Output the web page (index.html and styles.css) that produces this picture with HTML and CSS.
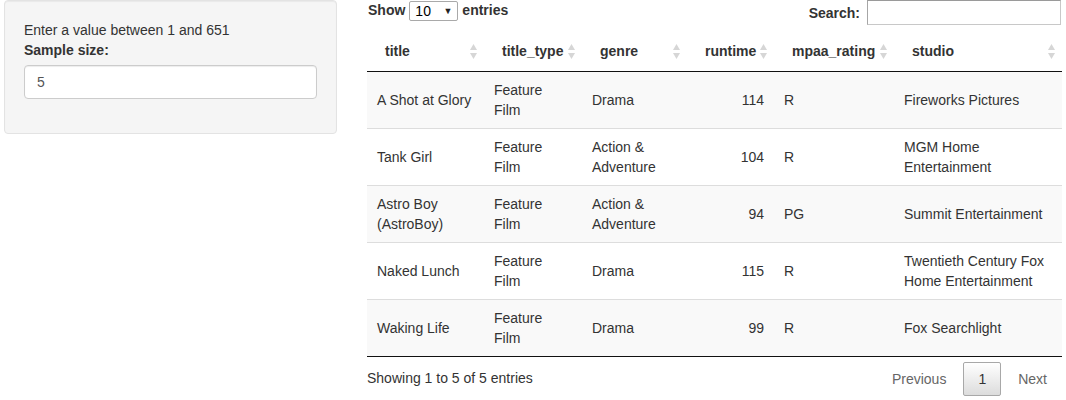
FILE: index.html
```html
<!DOCTYPE html>
<html>
<head>
<meta charset="utf-8">
<link rel="stylesheet" href="styles.css">
</head>
<body>
<div class="page">
  <div class="well">
    <div class="hint">Enter a value between 1 and 651</div>
    <div class="form-group">
      <label class="control-label" for="n">Sample size:</label>
      <input id="n" class="form-control" type="number" value="5">
    </div>
  </div>
  <div class="main">
    <div class="dt-top">
      <div class="dt-length">
        <span class="bold">Show</span>
        <span class="select-wrap"><span class="select-val">10</span><span class="select-arrow">▼</span></span>
        <span class="bold">entries</span>
      </div>
      <div class="dt-filter">
        <span class="bold">Search:</span>
        <input class="search" type="search">
      </div>
    </div>
    <table class="dt">
      <colgroup>
        <col style="width:117px"><col style="width:98px"><col style="width:105px"><col style="width:87px"><col style="width:120px"><col style="width:168px">
      </colgroup>
      <thead>
        <tr>
          <th>title<svg class="sort" width="7" height="15" viewBox="0 0 7 15"><polygon points="3.5,0 7,6 0,6"/><polygon points="0,9 7,9 3.5,15"/></svg></th>
          <th>title_type<svg class="sort" width="7" height="15" viewBox="0 0 7 15"><polygon points="3.5,0 7,6 0,6"/><polygon points="0,9 7,9 3.5,15"/></svg></th>
          <th>genre<svg class="sort" width="7" height="15" viewBox="0 0 7 15"><polygon points="3.5,0 7,6 0,6"/><polygon points="0,9 7,9 3.5,15"/></svg></th>
          <th class="num">runtime<svg class="sort" width="7" height="15" viewBox="0 0 7 15"><polygon points="3.5,0 7,6 0,6"/><polygon points="0,9 7,9 3.5,15"/></svg></th>
          <th>mpaa_rating<svg class="sort" width="7" height="15" viewBox="0 0 7 15"><polygon points="3.5,0 7,6 0,6"/><polygon points="0,9 7,9 3.5,15"/></svg></th>
          <th>studio<svg class="sort" width="7" height="15" viewBox="0 0 7 15"><polygon points="3.5,0 7,6 0,6"/><polygon points="0,9 7,9 3.5,15"/></svg></th>
        </tr>
      </thead>
      <tbody>
        <tr class="odd"><td>A Shot at Glory</td><td>Feature Film</td><td>Drama</td><td class="num">114</td><td>R</td><td>Fireworks Pictures</td></tr>
        <tr class="even"><td>Tank Girl</td><td>Feature Film</td><td>Action &amp; Adventure</td><td class="num">104</td><td>R</td><td>MGM Home Entertainment</td></tr>
        <tr class="odd"><td>Astro Boy (AstroBoy)</td><td>Feature Film</td><td>Action &amp; Adventure</td><td class="num">94</td><td>PG</td><td>Summit Entertainment</td></tr>
        <tr class="even"><td>Naked Lunch</td><td>Feature Film</td><td>Drama</td><td class="num">115</td><td>R</td><td>Twentieth Century Fox Home Entertainment</td></tr>
        <tr class="odd"><td>Waking Life</td><td>Feature Film</td><td>Drama</td><td class="num">99</td><td>R</td><td>Fox Searchlight</td></tr>
      </tbody>
    </table>
    <div class="dt-bottom">
      <div class="dt-info">Showing 1 to 5 of 5 entries</div>
      <div class="dt-paginate">
        <span class="pg disabled">Previous</span>
        <span class="pg current">1</span>
        <span class="pg disabled">Next</span>
      </div>
    </div>
  </div>
</div>
</body>
</html>
```
FILE: styles.css
```css
html, body {
  margin: 0;
  padding: 0;
  background: #fff;
}
body {
  font-family: "Liberation Sans", Arial, Helvetica, sans-serif;
  font-size: 14px;
  line-height: 20px;
  color: #333;
}
.page {
  display: flex;
  align-items: flex-start;
  gap: 30px;
  padding-left: 4px;
}
.well {
  box-sizing: border-box;
  width: 333px;
  padding: 19px;
  background: #f5f5f5;
  border: 1px solid #e3e3e3;
  border-radius: 4px;
  box-shadow: inset 0 1px 1px rgba(0,0,0,0.05);
}
.form-group {
  margin-bottom: 15px;
}
.control-label {
  display: block;
  font-weight: bold;
  margin-bottom: 5px;
}
.form-control {
  display: block;
  box-sizing: border-box;
  width: 100%;
  height: 34px;
  padding: 6px 12px;
  font-family: inherit;
  font-size: 14px;
  color: #555;
  background: #fff;
  border: 1px solid #ccc;
  border-radius: 4px;
  box-shadow: inset 0 1px 1px rgba(0,0,0,0.075);
  -moz-appearance: textfield;
}
.form-control::-webkit-outer-spin-button,
.form-control::-webkit-inner-spin-button {
  -webkit-appearance: none;
  margin: 0;
}
.main {
  width: 695px;
}
.bold {
  font-weight: bold;
}
.dt-top {
  display: flex;
  justify-content: space-between;
  height: 31px;
}
.dt-length {
  display: flex;
  align-items: flex-start;
  gap: 4px;
  height: 20px;
  padding-left: 1px;
}
.select-wrap {
  box-sizing: border-box;
  display: flex;
  align-items: center;
  justify-content: space-between;
  width: 49px;
  height: 20px;
  margin-top: 1px;
  padding: 0 5px 0 5px;
  border: 1px solid #a9a9a9;
  border-radius: 2px;
  background: #fff;
  color: #000;
  font-size: 14px;
  line-height: 18px;
}
.select-arrow {
  font-size: 9px;
  color: #222;
}
.dt-filter {
  display: flex;
  align-items: center;
  height: 25px;
}
.search {
  box-sizing: border-box;
  width: 194px;
  height: 25px;
  margin-left: 7px;
  margin-right: 1px;
  padding: 1px 4px;
  border: 1px solid #c8c8c8;
  border-top-color: #9a9a9a;
  border-left-color: #a6a6a6;
  background: #fff;
  font-family: inherit;
  font-size: 14px;
}
table.dt {
  width: 695px;
  table-layout: fixed;
  border-collapse: separate;
  border-spacing: 0;
  border-bottom: 1px solid #111;
}
table.dt th {
  position: relative;
  padding: 10px 18px;
  font-weight: bold;
  text-align: left;
  white-space: nowrap;
  border-bottom: 1px solid #111;
}
table.dt th .sort {
  position: absolute;
  right: 7px;
  top: 13px;
  fill: #d6d6d6;
}
table.dt td {
  padding: 8px 10px;
  vertical-align: middle;
  border-top: 1px solid #ddd;
}
table.dt tbody tr:first-child td {
  border-top: none;
}
table.dt tr.odd td {
  background: #f9f9f9;
}
table.dt .num {
  text-align: right;
}
.dt-bottom {
  display: flex;
  justify-content: space-between;
  align-items: flex-start;
}
.dt-info {
  padding-top: 11px;
}
.dt-paginate {
  display: flex;
  align-items: center;
  padding-top: 5px;
}
.pg {
  box-sizing: border-box;
  height: 34px;
  padding: 7px 14px;
  margin-left: 2px;
  border: 1px solid transparent;
  border-radius: 2px;
  line-height: 18px;
  color: #666;
}
.pg.current {
  color: #333;
  border: 1px solid #a8a8a8;
  background: linear-gradient(to bottom, #fff 0%, #dcdcdc 100%);
}
```
